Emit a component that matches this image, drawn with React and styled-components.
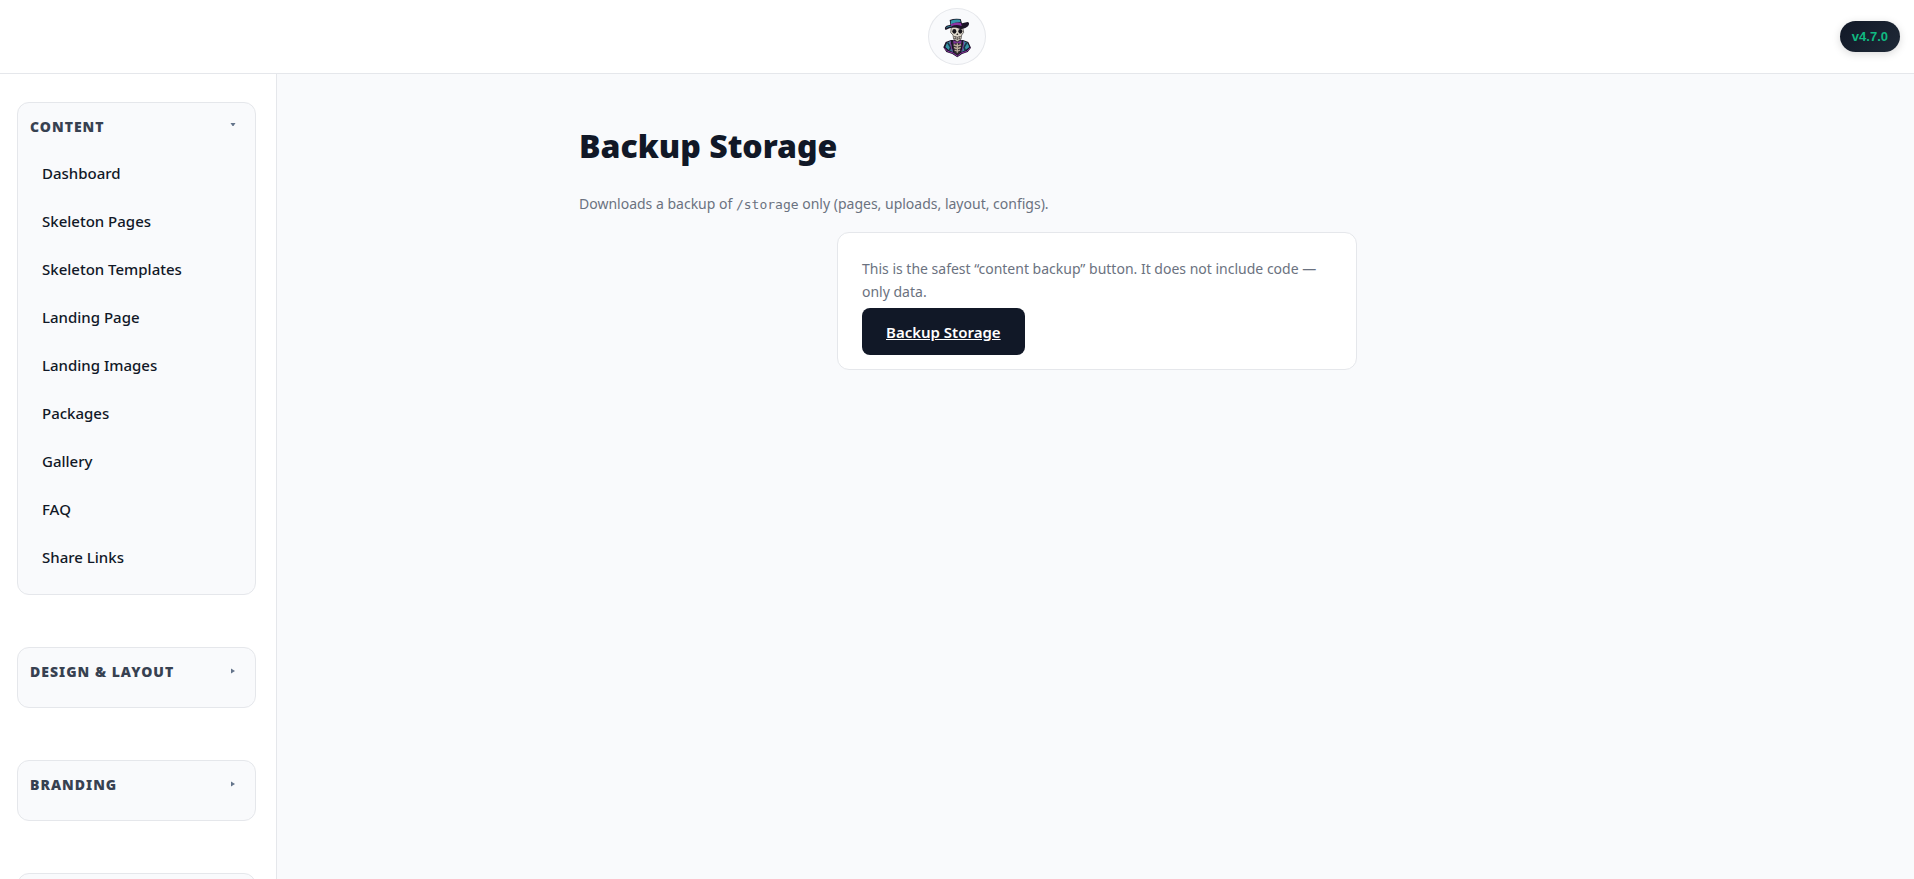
import { useState } from 'react';
import styled, { createGlobalStyle } from 'styled-components';

const GlobalStyle = createGlobalStyle`
  * {
    box-sizing: border-box;
  }

  body {
    margin: 0;
    background: #f9fafc;
    color: #111827;
    font-family: 'Segoe UI', 'Noto Sans', 'Open Sans', sans-serif;
    font-size: 15px;
  }
`;

const Page = styled.div`
  display: flex;
  flex-direction: column;
  height: 100vh;
  overflow: hidden;
`;

const Header = styled.header`
  display: grid;
  grid-template-columns: 1fr auto 1fr;
  align-items: center;
  padding: 8px 14px;
  background: #ffffff;
  border-bottom: 1px solid #e5e7eb;
`;

const LogoLink = styled.a`
  grid-column: 2;
  display: flex;
  align-items: center;
  justify-content: center;
  width: 58px;
  height: 57px;
  border: 1px solid #e5e7eb;
  border-radius: 50%;
  background: #f9fafc;
`;

const Version = styled.span`
  justify-self: end;
  padding: 8px 12px;
  border-radius: 999px;
  background: linear-gradient(135deg, #111827, #1f2937);
  box-shadow: 0 2px 8px rgba(0, 0, 0, 0.15);
  color: #10b981;
  font-family: 'Liberation Sans', Arial, sans-serif;
  font-size: 13px;
  font-weight: 700;
  line-height: 15px;
`;

const Body = styled.div`
  display: grid;
  grid-template-columns: 280px 1fr;
  flex: 1;
  min-height: 0;
`;

const Sidebar = styled.nav`
  display: flex;
  flex-direction: column;
  gap: 52px;
  margin-right: 3px;
  padding: 28px 20px 28px 17px;
  overflow: hidden;
  background: #ffffff;
  border-right: 1px solid #e5e7eb;
`;

const Section = styled.section`
  flex-shrink: 0;
  padding: 12px;
  border: 1px solid #e5e7eb;
  border-radius: 12px;
  background: #f9fafc;
`;

const SectionToggle = styled.button`
  display: flex;
  justify-content: space-between;
  width: 100%;
  padding: 0 7px 11px 0;
  border: 0;
  background: none;
  color: #374151;
  font-family: inherit;
  font-size: 14px;
  font-weight: 900;
  line-height: 24px;
  letter-spacing: 1px;
  text-transform: uppercase;
  cursor: pointer;
`;

const Caret = styled.svg`
  width: 6px;
  height: 6px;
  margin: 8px 0;
  fill: #64748b;
`;

const NavLink = styled.a`
  display: block;
  padding: 11px 12px 13px;
  border-radius: 8px;
  color: #111827;
  font-weight: 500;
  line-height: 24px;
  text-decoration: none;

  &:hover {
    background: #e5e7eb;
  }
`;

const Main = styled.main`
  overflow: auto;
`;

const Container = styled.div`
  max-width: 1100px;
  margin: 0 auto;
  padding: 48px 32px;
`;

const Title = styled.h1`
  margin: 0;
  font-size: 32px;
  font-weight: 900;
  line-height: 48px;
`;

const Muted = styled.p`
  margin: 0;
  color: #6b7280;
  font-size: 14px;
  line-height: 23px;

  code {
    font-family: Consolas, 'DejaVu Sans Mono', monospace;
    font-size: 13px;
  }
`;

const Intro = styled(Muted)`
  margin: 22px 0 16px;
`;

const Card = styled.div`
  display: flex;
  flex-direction: column;
  align-items: flex-start;
  gap: 5px;
  max-width: 520px;
  margin: 0 auto;
  padding: 24px 24px 14px;
  border: 1px solid #e5e7eb;
  border-radius: 12px;
  background: #ffffff;
`;

const ButtonLink = styled.a`
  padding: 12px 24px 11px;
  border-radius: 8px;
  background: #111827;
  color: #ffffff;
  font-weight: 600;
  line-height: 24px;
`;

const contentLinks = [
  'Dashboard',
  'Skeleton Pages',
  'Skeleton Templates',
  'Landing Page',
  'Landing Images',
  'Packages',
  'Gallery',
  'FAQ',
  'Share Links',
];

const NavSection = ({ title, links = [], defaultOpen = false }) => {
  const [open, setOpen] = useState(defaultOpen);

  return (
    <Section>
      <SectionToggle type="button" aria-expanded={open} onClick={() => setOpen(!open)}>
        {title}
        <Caret viewBox="0 0 6 6" aria-hidden="true">
          <path d={open ? 'M0.5 0h5L3.5 3h-1z' : 'M1 0.5v5L5 3z'} />
        </Caret>
      </SectionToggle>
      {open &&
        links.map((link) => (
          <NavLink key={link} href="#">
            {link}
          </NavLink>
        ))}
    </Section>
  );
};

const SkeletonLogo = () => (
  <svg width="32" height="42" viewBox="0 0 96 126" aria-hidden="true">
    {/* jacket */}
    <path d="M30 72 L14 78 L7 94 L16 108 L34 114 L49 124 L63 114 L80 108 L90 95 L82 78 L66 72 Z" fill="#191326" />
    <path d="M29 75 L18 80 L13 93 L24 103 L36 108 L31 91 Z" fill="#3795a6" />
    <path d="M67 75 L79 80 L85 93 L73 103 L61 108 L66 91 Z" fill="#3795a6" />
    <path d="M20 80 L29 94 L25 104 M77 80 L69 94 L73 104" fill="none" stroke="#1c3246" strokeWidth="5" />
    <path d="M10 96 L20 106 L36 111 L49 120 L61 111 L77 106 L88 96" fill="none" stroke="#8c35a4" strokeWidth="3" />
    <path d="M27 76 L34 106 M69 76 L63 106" fill="none" stroke="#7b318e" strokeWidth="3" />
    {/* ribs */}
    <path d="M34 78 L40 110 L49 118 L57 110 L64 78 Z" fill="#302a2f" />
    <path d="M49 82v28 M38 86q11 7 22 0 M39 94q10 7 20 0 M41 102q8 6 16 0" fill="none" stroke="#bcae9e" strokeWidth="4" />
    <path d="M36 73 L49 78 L62 73 L60 84 L49 80 L38 84 Z" fill="#7c3594" />
    {/* skull */}
    <path d="M31 34 Q49 27 65 34 L68 49 L62 57 L60 70 L49 77 L38 70 L36 57 L29 50 Z" fill="#ded8cb" stroke="#37312f" strokeWidth="2" />
    <ellipse cx="40" cy="46" rx="6" ry="7" fill="#17141a" />
    <ellipse cx="58" cy="46" rx="6" ry="7" fill="#17141a" />
    <path d="M49 51l-3 6h6z" fill="#2b2424" />
    <path d="M38 61q11 5 22 0 M39 67q10 5 20 0 M43 61v9 M49 63v10 M55 61v9" fill="none" stroke="#423b3a" strokeWidth="2" />
    {/* hat */}
    <path d="M14 42 Q8 35 17 29 L28 26 L26 12 Q40 6 59 9 L63 22 L80 18 Q88 20 81 31 Q69 42 55 38 Q33 29 14 42 Z" fill="#1c1527" />
    <path d="M29 14 Q42 9 57 11 L59 19 Q43 18 30 25 Z" fill="#3399ab" />
    <path d="M29 25 Q45 17 60 21 L62 30 Q46 24 31 31 Z" fill="#8c35a4" />
    <path d="M16 35 Q24 29 32 31" fill="none" stroke="#2c7e92" strokeWidth="3" />
  </svg>
);

const App = () => {
  return (
    <Page>
      <GlobalStyle />
      <Header>
        <LogoLink href="#" aria-label="Home">
          <SkeletonLogo />
        </LogoLink>
        <Version>v4.7.0</Version>
      </Header>
      <Body>
        <Sidebar>
          <NavSection title="Content" links={contentLinks} defaultOpen />
          <NavSection title="Design & Layout" />
          <NavSection title="Branding" />
          <NavSection title="" />
        </Sidebar>
        <Main>
          <Container>
            <Title>Backup Storage</Title>
            <Intro>
              Downloads a backup of <code>/storage</code> only (pages, uploads, layout, configs).
            </Intro>
            <Card>
              <Muted>
                This is the safest “content backup” button. It does not include code — only data.
              </Muted>
              <ButtonLink href="#">Backup Storage</ButtonLink>
            </Card>
          </Container>
        </Main>
      </Body>
    </Page>
  );
};

export default App;
